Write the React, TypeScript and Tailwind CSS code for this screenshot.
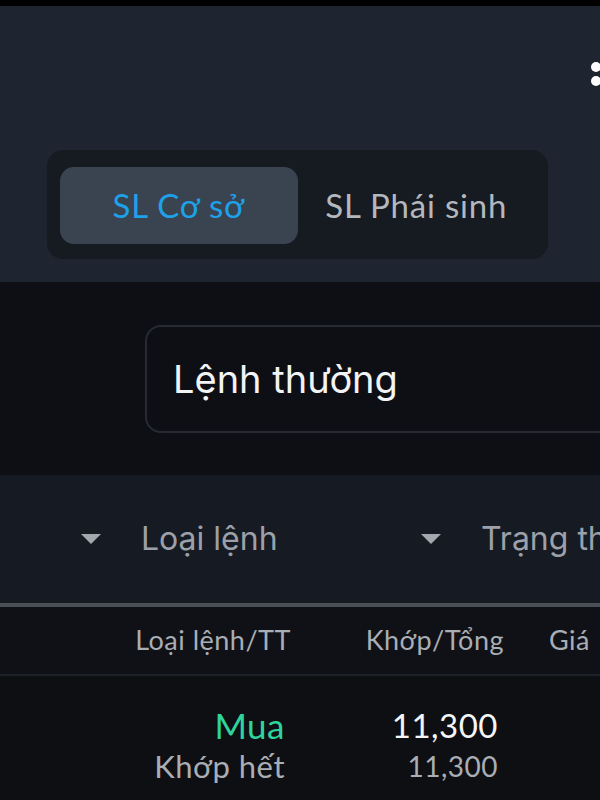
import React from "react";

const geo = "font-['Lato','Noto_Sans',sans-serif]";
const ui = "font-['Inter','Noto_Sans',sans-serif]";

function Caret() {
  return (
    <svg width="22" height="12" viewBox="0 0 22 12" className="shrink-0">
      <path d="M1 1 L21 1 L11 11 Z" fill="#a3a7ae" />
    </svg>
  );
}

export default function App() {
  return (
    <div className="w-[600px] h-[800px] overflow-hidden bg-[#0d0f13] flex flex-col">
      <div className="h-[6px] bg-black shrink-0" />

      {/* header */}
      <div className="h-[276px] shrink-0 bg-[#1f2530] flex flex-col">
        <div className="h-[144px] flex justify-end pt-[56px] -mr-[1px]">
          <div className="flex flex-col gap-[4px]">
            <div className="w-[10px] h-[10px] rounded-full bg-white" />
            <div className="w-[10px] h-[10px] rounded-full bg-white" />
          </div>
        </div>
        <div className={`ml-[47px] w-[501px] h-[109px] rounded-[16px] bg-[#161a21] flex px-[13px] pt-[17px] pb-[15px] tracking-[0.8px] ${geo}`}>
          <div className="flex-1 rounded-[14px] bg-[#3a4350] flex items-center justify-center text-[33px] text-[#1da1e8]">
            SL Cơ sở
          </div>
          <div className="flex-1 flex items-center justify-center text-[33px] text-[#b3b7be]">
            SL Phái sinh
          </div>
        </div>
      </div>

      {/* order type */}
      <div className="h-[193px] shrink-0 bg-[#0d0f14] pt-[43px] pl-[145px]">
        <div className={`w-[520px] h-[108px] rounded-[16px] border-[2px] border-[#262b33] flex items-center pl-[26px] text-[38px] text-[#f2f3f5] ${ui}`}>
          Lệnh thường
        </div>
      </div>

      {/* filters */}
      <div className={`h-[128px] shrink-0 bg-[#161a22] flex items-center text-[32px] text-[#9ca1a9] ${ui}`}>
        <div className="ml-[80px] shrink-0">
          <Caret />
        </div>
        <span className="ml-[39px] w-[279px] shrink-0 whitespace-nowrap">Loại lệnh</span>
        <Caret />
        <span className="ml-[39px] shrink-0 whitespace-nowrap">Trạng thái</span>
      </div>
      <div className="h-[4px] shrink-0 bg-[#4b5058]" />

      {/* table header */}
      <div className={`h-[69px] shrink-0 bg-[#0f1116] border-b-[2px] border-[#1d2229] flex items-center text-[27px] tracking-[0.5px] text-[#a9adb4] whitespace-nowrap ${geo}`}>
        <span className="w-[291px] text-right">Loại lệnh/TT</span>
        <span className="w-[213px] text-right">Khớp/Tổng</span>
        <span className="ml-[45px]">Giá</span>
      </div>

      {/* row */}
      <div className={`flex pt-[28px] tracking-[0.5px] ${geo}`}>
        <div className="w-[285px] flex flex-col items-end">
          <span className="text-[35px] leading-[42px] text-[#2fd49d]">Mua</span>
          <span className="text-[31px] leading-[40px] text-[#a9adb4]">Khớp hết</span>
        </div>
        <div className="w-[213px] flex flex-col items-end">
          <span className="text-[33px] leading-[42px] text-[#f4f5f7]">11,300</span>
          <span className="text-[28px] leading-[40px] text-[#a9adb4]">11,300</span>
        </div>
      </div>
    </div>
  );
}
